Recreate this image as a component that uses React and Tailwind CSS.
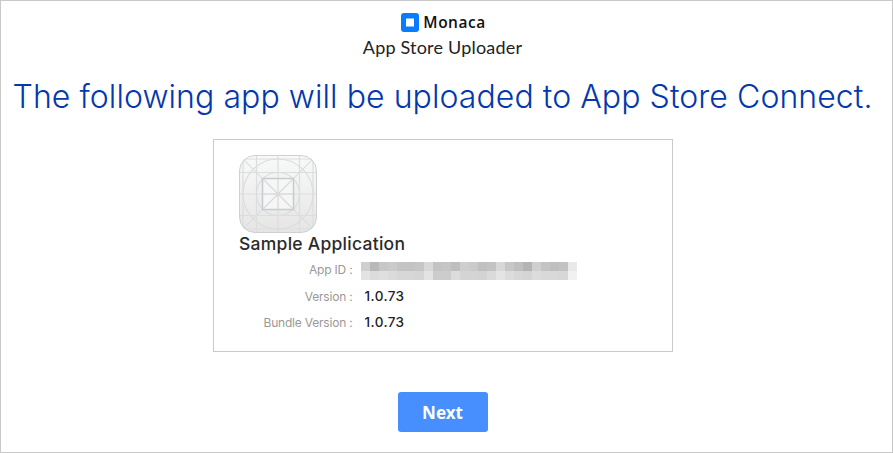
import React from "react";

const mosaicTop = ["#cfcfcf", "#b8b8b8", "#c7c7c7", "#cacaca", "#c4c4c4", "#c3c3c3", "#c6c6c6", "#d8d8d8", "#c3c3c3", "#c5c5c5", "#bebebe", "#cecece", "#cacaca", "#c0c0c0", "#c3c3c3", "#d8d8d8", "#c7c7c7", "#bfbfbf", "#b4b4b4", "#cfcfcf", "#c3c3c3", "#bfbfbf", "#c3c3c3", "#e9e9e9"];
const mosaicBottom = ["#e3e3e3", "#dcdcdc", "#dfdfdf", "#dbdbdb", "#d7d7d7", "#d7d7d7", "#d5d5d5", "#e3e3e3", "#cccccc", "#cccccc", "#dcdcdc", "#d4d4d4", "#d4d4d4", "#d3d3d3", "#dadada", "#e4e4e4", "#dcdcdc", "#d7d7d7", "#d4d4d4", "#dcdcdc", "#d9d9d9", "#d9d9d9", "#d7d7d7", "#f1f1f1"];

function MosaicRow({ cells }) {
  return (
    <div className="flex h-[9px]">
      {cells.map((c, i) => (
        <span key={i} className="w-[9px]" style={{ backgroundColor: c }} />
      ))}
    </div>
  );
}

function AppIcon() {
  return (
    <svg width="80" height="80" viewBox="0 0 80 80" className="block">
      <defs>
        <linearGradient id="tile" x1="0" y1="0" x2="0" y2="1">
          <stop offset="0" stopColor="#f8f9f9" />
          <stop offset="1" stopColor="#e5e5e4" />
        </linearGradient>
        <clipPath id="tileClip"><rect x="1" y="1" width="78" height="78" rx="16" /></clipPath>
      </defs>
      <rect x="1.5" y="1.5" width="77" height="77" rx="15.5" fill="url(#tile)" />
      <g clipPath="url(#tileClip)" fill="none" stroke="#dcddde" strokeWidth="1.2">
        <path d="M5 0V80M18.5 0V80M40 0V80M61.5 0V80M75 0V80M0 5H80M0 18.5H80M0 40H80M0 61.5H80M0 75H80M0 0L80 80M80 0L0 80" />
        <circle cx="40" cy="40" r="35" />
        <circle cx="40" cy="40" r="21.5" />
      </g>
      <rect x="24.5" y="24.5" width="31" height="31" fill="#f6f6f6" stroke="#c6cbcf" strokeWidth="1.5" />
      <path d="M25 25L55 55M55 25L25 55M40 25V55M25 40H55" stroke="#d9dadb" strokeWidth="1.3" fill="none" />
      <rect x="1.5" y="1.5" width="77" height="77" rx="15.5" fill="none" stroke="#cdd1d4" />
    </svg>
  );
}

function Field({ label, children }) {
  return (
    <div className="flex h-[26px] items-center">
      <span className="w-[115px] whitespace-nowrap pt-[2px] text-right text-[12px] tracking-[-0.2px] text-[#999]">{label}</span>
      {children}
    </div>
  );
}

export default function App() {
  return (
    <main className="flex h-[453px] w-[893px] flex-col items-center overflow-hidden border border-[#c9c9c9] bg-white pr-[8px] font-['Inter','Noto_Sans',sans-serif]">
      <header className="flex flex-col items-center pt-[11px]">
        <div className="flex h-[21px] items-center gap-[4px] pl-[2px]">
          <svg width="18" height="19" viewBox="0 0 18 19">
            <rect width="18" height="19" rx="3" fill="#087cff" />
            <rect x="5" y="5.5" width="8" height="8" fill="#fff" />
          </svg>
          <span className="pb-[2px] font-['Open_Sans',sans-serif] text-[15.5px] font-semibold leading-[20px] tracking-[0.5px] text-[#111]">Monaca</span>
        </div>
        <div className="mt-[2px] whitespace-nowrap font-['Lato',sans-serif] text-[18px] leading-[24px] tracking-[0.2px] text-[#222]">App Store Uploader</div>
      </header>
      <h1 className="mt-[18px] whitespace-nowrap text-[32px] font-light leading-[40px] tracking-[0.07px] text-[#0438ac]">
        The following app will be uploaded to App Store Connect.
      </h1>
      <section className="mt-[22px] h-[213px] w-[460px] shrink-0 border border-[#cacaca] pl-[24px] pt-[14px]">
        <AppIcon />
        <h2 className="ml-[1.5px] h-[22px] whitespace-nowrap text-[17.5px] font-medium leading-[19px] tracking-[0.26px] text-[#2b2b2b]">Sample Application</h2>
        <Field label="App ID :">
          <div className="ml-[8px] mt-[4px]">
            <MosaicRow cells={mosaicTop} />
            <MosaicRow cells={mosaicBottom} />
          </div>
        </Field>
        <div className="pt-px">
          <Field label="Version :"><span className="ml-[12px] pt-px text-[13.5px] font-medium tracking-[0.4px] text-[#222]">1.0.73</span></Field>
          <Field label="Bundle Version :"><span className="ml-[12px] pt-px text-[13.5px] font-medium tracking-[0.4px] text-[#222]">1.0.73</span></Field>
        </div>
      </section>
      <button className="mt-[40px] h-[40px] w-[90px] shrink-0 rounded-[3px] bg-[#478fff] pt-[2px] font-['Noto_Sans',sans-serif] text-[17px] font-bold text-white">Next</button>
    </main>
  );
}
